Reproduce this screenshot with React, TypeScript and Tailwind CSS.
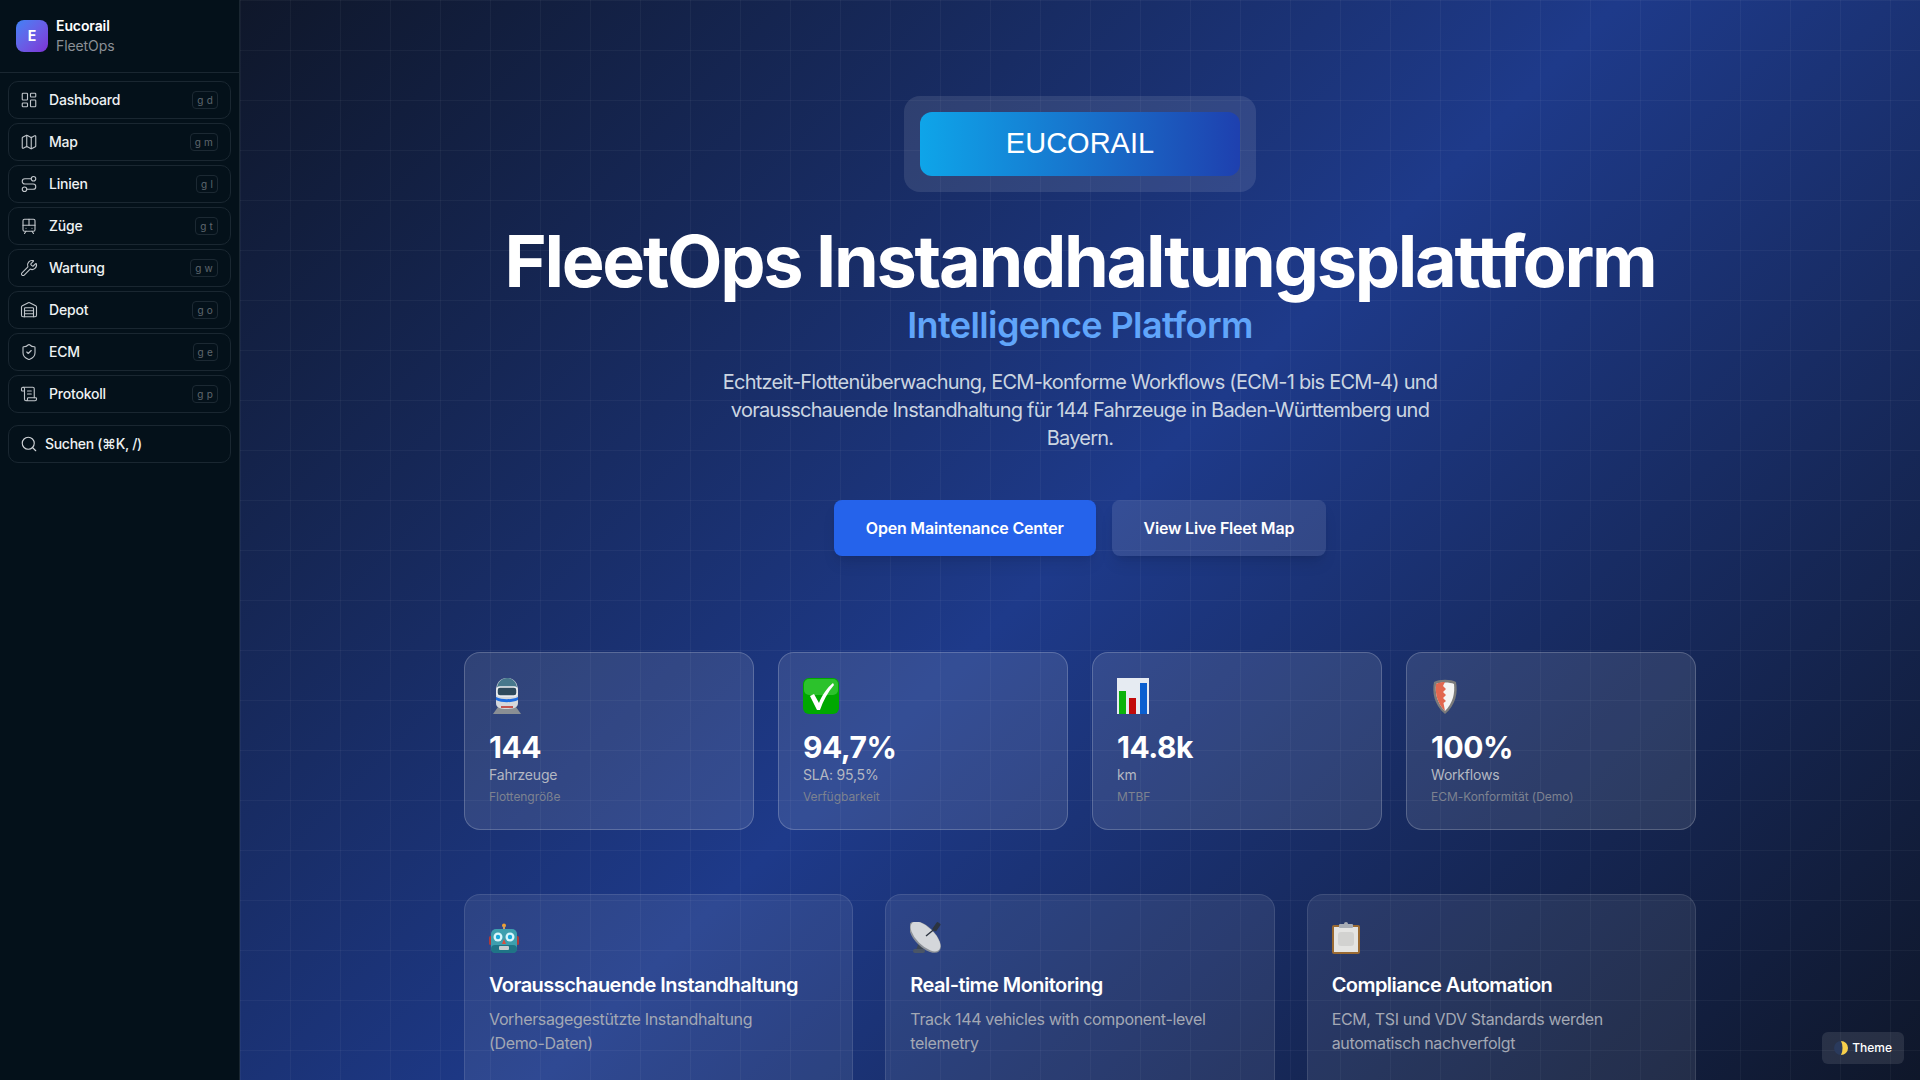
import React from 'react';
import { LayoutDashboard, Map, Route, TramFront, Wrench, Warehouse, ShieldCheck, ScrollText, Search } from 'lucide-react';

const navItems = [
  { label: 'Dashboard', keys: 'g d', icon: LayoutDashboard },
  { label: 'Map', keys: 'g m', icon: Map },
  { label: 'Linien', keys: 'g l', icon: Route },
  { label: 'Züge', keys: 'g t', icon: TramFront },
  { label: 'Wartung', keys: 'g w', icon: Wrench },
  { label: 'Depot', keys: 'g o', icon: Warehouse },
  { label: 'ECM', keys: 'g e', icon: ShieldCheck },
  { label: 'Protokoll', keys: 'g p', icon: ScrollText },
];

const TrainEmoji = () => (
  <svg width="36" height="36" viewBox="0 0 36 36">
    <path d="M4 36 L9 29 H27 L32 36 Z" fill="#8a8f94" />
    <path d="M7 13 C7 4 12 0 18 0 C24 0 29 4 29 13 V25 C29 29 26 31 18 31 C10 31 7 29 7 25 Z" fill="#d5d8dc" />
    <path d="M8 11 C8 4 13 0 18 0 C23 0 28 4 28 11 Z" fill="#47788c" />
    <rect x="8" y="9" width="20" height="9" rx="3" fill="#2f4a5c" stroke="#eef0f2" strokeWidth="1.5" />
    <path d="M7 19 C13 22 23 22 29 19 V22 C23 25 13 25 7 22 Z" fill="#1d6ce0" />
    <rect x="12" y="28" width="12" height="2" fill="#c4564f" />
  </svg>
);

const CheckEmoji = () => (
  <svg width="36" height="36" viewBox="0 0 36 36">
    <rect x="0" y="0" width="36" height="36" rx="6" fill="#00a800" />
    <rect x="1" y="1" width="34" height="16" rx="5" fill="#2cc22c" />
    <path d="M7 18 L11 16 L16 25 C19 17 24 10 30 5 L31 7 C25 14 20 23 17 32 H14 Z" fill="#fff" />
  </svg>
);

const ChartEmoji = () => (
  <svg width="32" height="36" viewBox="0 0 32 36">
    <rect x="0" y="0" width="32" height="36" fill="#e6ebf2" />
    <rect x="2" y="13" width="7" height="23" fill="#0bb30b" />
    <rect x="12" y="20" width="7" height="16" fill="#c20a0a" />
    <rect x="23" y="5" width="7" height="31" fill="#0a5fd0" />
  </svg>
);

const ShieldEmoji = () => (
  <svg width="32" height="36" viewBox="0 0 32 36">
    <path d="M3 4 C8 1 20 1 25 4 C27 14 25 27 14 36 C3 27 1 14 3 4 Z" fill="#7b7b7b" />
    <path d="M5 6 C9 4 19 4 23 6 C24 15 22 25 14 33 C6 25 4 15 5 6 Z" fill="#f4f4f4" />
    <path d="M5 6 C8 4.5 11 4 14 4 L12 8 L15 11 L12 14 L15 17 L12 20 L15 23 L12.5 25 L14 33 C6 25 4 15 5 6 Z" fill="#e2674f" />
  </svg>
);

const RobotEmoji = () => (
  <svg width="30" height="30" viewBox="0 0 30 30">
    <circle cx="15" cy="2.5" r="2" fill="#f0a030" />
    <rect x="14" y="3" width="2" height="4" fill="#caa060" />
    <rect x="0" y="13" width="3" height="9" rx="1.5" fill="#b03a3a" />
    <rect x="27" y="13" width="3" height="9" rx="1.5" fill="#b03a3a" />
    <rect x="2" y="6" width="26" height="24" rx="5" fill="#3d9fae" />
    <rect x="2" y="22" width="26" height="8" rx="4" fill="#1f7486" />
    <circle cx="9" cy="14" r="4.5" fill="#d8f6fb" />
    <circle cx="21" cy="14" r="4.5" fill="#d8f6fb" />
    <circle cx="9" cy="14" r="2.2" fill="#1aa7d8" />
    <circle cx="21" cy="14" r="2.2" fill="#1aa7d8" />
    <path d="M15 16 L17 21 H13 Z" fill="#d9503f" />
    <rect x="10" y="23" width="10" height="4" rx="1" fill="#c6ced0" />
  </svg>
);

const SatelliteEmoji = () => (
  <svg width="32" height="32" viewBox="0 0 32 32">
    <path d="M9 20 L6 28 H13 L14 24 Z" fill="#3c4654" />
    <rect x="3" y="27" width="12" height="4" rx="2" fill="#4a5566" />
    <ellipse cx="15" cy="15" rx="20" ry="10" transform="rotate(45 15 15)" fill="#8d9299" />
    <ellipse cx="15.5" cy="14.5" rx="19" ry="9" transform="rotate(45 15.5 14.5)" fill="#d4d7db" />
    <path d="M16 14 L27 5" stroke="#2c3440" strokeWidth="1.4" />
    <rect x="24" y="0" width="4.5" height="9" rx="1" fill="#2c3440" transform="rotate(35 26 5)" />
  </svg>
);

const ClipboardEmoji = () => (
  <svg width="28" height="32" viewBox="0 0 28 32">
    <rect x="0" y="3" width="28" height="29" rx="2" fill="#9a6a32" />
    <rect x="2" y="5" width="24" height="25" fill="#e4e4e2" />
    <rect x="6" y="10" width="16" height="14" rx="3" fill="#d2d2d0" />
    <rect x="7" y="2" width="14" height="4" rx="1" fill="#a8adb4" />
    <circle cx="14" cy="2" r="2" fill="#a8adb4" />
  </svg>
);

const stats = [
  { icon: <TrainEmoji />, value: '144', label: 'Fahrzeuge', sub: 'Flottengröße' },
  { icon: <CheckEmoji />, value: '94,7%', label: 'SLA: 95,5%', sub: 'Verfügbarkeit' },
  { icon: <ChartEmoji />, value: '14.8k', label: 'km', sub: 'MTBF' },
  { icon: <ShieldEmoji />, value: '100%', label: 'Workflows', sub: 'ECM-Konformität (Demo)' },
];

const features = [
  {
    icon: <RobotEmoji />,
    title: 'Vorausschauende Instandhaltung',
    text: (
      <>
        Vorhersagegestützte Instandhaltung <span className="whitespace-nowrap">(Demo-Daten)</span>
      </>
    ),
  },
  { icon: <SatelliteEmoji />, title: 'Real-time Monitoring', text: 'Track 144 vehicles with component-level telemetry' },
  { icon: <ClipboardEmoji />, title: 'Compliance Automation', text: 'ECM, TSI und VDV Standards werden automatisch nachverfolgt' },
];

export default function App() {
  return (
    <div className="flex h-screen overflow-hidden bg-[#04111a] font-['Inter',sans-serif] text-white">
      <aside className="flex w-[240px] shrink-0 flex-col border-r border-[#1a2731] bg-[#04111a]">
        <div className="flex h-[73px] shrink-0 items-center gap-2 border-b border-[#1a2731] px-4">
          <div className="flex h-8 w-8 items-center justify-center rounded-lg bg-gradient-to-br from-[#3b82f6] to-[#7c2fd6] text-sm font-bold">
            E
          </div>
          <div className="text-sm leading-5 tracking-[-0.1px]">
            <div className="font-semibold text-white">Eucorail</div>
            <div className="text-[#8b9096]">FleetOps</div>
          </div>
        </div>
        <nav className="flex flex-col gap-1 px-2 pt-2">
          {navItems.map(({ label, keys, icon: Icon }) => (
            <div key={label} className="flex h-[38px] items-center rounded-[10px] border border-[#1a2731] pl-[11px] pr-[12px]">
              <Icon size={18} strokeWidth={1.5} className="text-[#c0c5ca]" />
              <span className="ml-[11px] flex-1 text-sm font-medium tracking-[-0.2px] text-[#eef1f3]">{label}</span>
              <kbd className="rounded border border-[#1c2933] px-1 py-px font-['Inter',sans-serif] text-[10px] leading-[14px] tracking-[0.02em] text-[#5f676e]">
                {keys}
              </kbd>
            </div>
          ))}
        </nav>
        <div className="mx-2 mt-[12px] flex h-[38px] items-center gap-[7px] rounded-[10px] border border-[#1a2731] pl-[11px]">
          <Search size={18} strokeWidth={1.5} className="text-[#d0d4d8]" />
          <span className="text-sm font-medium tracking-[-0.3px] text-[#eef1f3]">Suchen (⌘K, /)</span>
        </div>
      </aside>

      <main className="relative flex-1 overflow-hidden bg-[linear-gradient(rgba(255,255,255,0.04)_1px,transparent_1px),linear-gradient(90deg,rgba(255,255,255,0.04)_1px,transparent_1px),linear-gradient(135deg,#0f172a_0%,#1e3a8a_50%,#0f172a_100%)] bg-[size:50px_50px,50px_50px,100%_100%]">
        <div className="mx-auto flex w-[1232px] flex-col items-center pt-[96px]">
          <div className="rounded-2xl bg-white/10 p-4">
            <div className="flex h-16 w-80 items-center justify-center rounded-xl bg-gradient-to-r from-[#0ea5e9] to-[#1e40af] font-['Liberation_Sans',sans-serif] text-[29px] text-white">
              EUCORAIL
            </div>
          </div>

          <h1 className="mt-6 text-[72px] font-bold leading-[89px] tracking-[-2.3px] text-white">
            FleetOps Instandhaltungsplattform
          </h1>
          <h2 className="text-4xl font-semibold leading-10 tracking-[-0.6px] text-[#60a5fa]">Intelligence Platform</h2>
          <p className="mt-[23px] w-[768px] text-center text-xl leading-7 tracking-[-0.76px] text-[#cbd5e1]">
            Echtzeit-Flottenüberwachung, ECM-konforme Workflows (ECM-1 bis ECM-4) und vorausschauende Instandhaltung für 144 Fahrzeuge in Baden-Württemberg und Bayern.
          </p>

          <div className="mt-12 flex gap-4">
            <div className="flex h-14 items-center rounded-lg bg-[#2563eb] px-8 font-semibold tracking-[-0.2px] shadow-lg">Open Maintenance Center</div>
            <div className="flex h-14 items-center rounded-lg bg-white/10 px-8 font-semibold tracking-[-0.2px] shadow-lg">View Live Fleet Map</div>
          </div>

          <div className="mt-24 grid w-full grid-cols-4 gap-6">
            {stats.map((s) => (
              <div key={s.sub} className="h-[178px] rounded-2xl border border-white/20 bg-white/10 px-[24px] pt-[25px]">
                <div className="flex h-9 items-center">{s.icon}</div>
                <div className="mt-[15px] text-[30px] font-bold leading-9 tracking-[-0.5px]">{s.value}</div>
                <div className="text-sm leading-5 tracking-[-0.2px] text-[#b4b8c2]">{s.label}</div>
                <div className="mt-1 text-xs leading-4 tracking-[-0.05px] text-[#7d8290]">{s.sub}</div>
              </div>
            ))}
          </div>

          <div className="mt-16 grid w-full grid-cols-3 gap-8">
            {features.map((f) => (
              <div key={f.title} className="h-[220px] rounded-2xl border border-white/10 bg-white/[0.08] px-[24px] pt-[25px]">
                <div className="flex h-9 items-center">{f.icon}</div>
                <h3 className="mt-[15px] text-xl font-semibold leading-7 tracking-[-0.55px]">{f.title}</h3>
                <p className="mt-2 text-base leading-6 tracking-[-0.35px] text-[#a3a8b4]">{f.text}</p>
              </div>
            ))}
          </div>
        </div>

        <div className="absolute bottom-4 right-4 flex h-8 items-center gap-1 rounded-md bg-white/10 px-3 text-xs font-medium">
          <svg width="14" height="14" viewBox="0 0 14 14">
            <circle cx="7" cy="7" r="7" fill="#2a3a5c" />
            <path d="M7 0 A7 7 0 0 1 7 14 C9 10 9 4 7 0 Z" fill="#f7cf4a" />
          </svg>
          Theme
        </div>
      </main>
    </div>
  );
}
